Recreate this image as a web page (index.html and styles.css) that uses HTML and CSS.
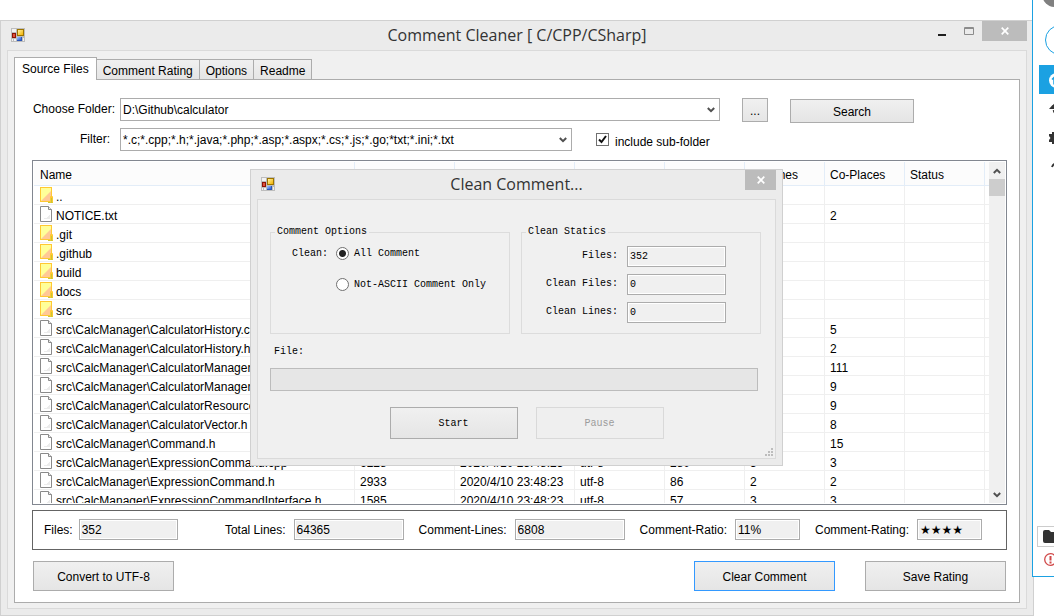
FILE: index.html
```
<!DOCTYPE html>
<html lang="en">
<head>
<meta charset="utf-8">
<title>Comment Cleaner</title>
<link rel="stylesheet" href="styles.css">
</head>
<body>
<svg class="defs" aria-hidden="true">
  <defs>
    <linearGradient id="gold" x1="0" y1="0" x2="1" y2="1"><stop offset="0" stop-color="#fff0a0"/><stop offset="1" stop-color="#f2b200"/></linearGradient>
    <linearGradient id="blue" x1="0" y1="0" x2="1" y2="1"><stop offset="0" stop-color="#a8c8ff"/><stop offset="1" stop-color="#2a5fd0"/></linearGradient>
    <symbol id="app" viewBox="0 0 14 14">
      <path d="M0 0H14V14H0z" fill="#bdbdbd"/>
      <path d="M1 1h4v3H1zM1 11h1v2H1zM3 11h2v2H3zM12 10h1v3h-1z" fill="#f2f2f2"/>
      <path d="M6 1h7v7H6z" fill="#9c7400"/><path d="M7 2h5v5H7z" fill="url(#gold)"/>
      <path d="M1 5h4v5H1z" fill="#8c1408"/><path d="M2 6h2v3H2z" fill="#e0523c"/>
      <path d="M6 9h5v4H6z" fill="#2a55b8"/><path d="M6 9h4v3H6z" fill="url(#blue)"/>
    </symbol>
    <symbol id="folder" viewBox="0 0 13 16">
      <path d="M0 0H12V15H0z" fill="#ffc832"/>
      <path d="M1 1H11V14H1z" fill="#ffff99"/><path d="M11 4V14H1z" fill="#ffc896"/>
      <path d="M8 15h5v1H8z" fill="#c8c832"/>
      <path d="M10.500 15.500V9.500h2V15.500" fill="none" stroke="#ffc832"/><path d="M11 11h1v4h-1z" fill="#c8c832"/>
    </symbol>
    <symbol id="file" viewBox="0 0 13 16">
      <path d="M.5.500H8.500L11.500 3.500V15.500H.5z" fill="#fff" stroke="#8a8a8a"/>
      <path d="M8.500.500V3.500H11.500" fill="#eee" stroke="#8a8a8a"/>
      <path d="M10 9v4H4v-1h3v-1h1v-1h1V9z" fill="#ececec"/>
    </symbol>
    <symbol id="close" viewBox="0 0 8 8"><path d="M.7.700L7.300 7.300M7.300.700L.7 7.300" fill="none" stroke="#fff" stroke-width="1.700"/></symbol>
    <symbol id="chev" viewBox="0 0 8 6"><path d="M.8 1L4 4.200L7.200 1" fill="none" stroke="#505050" stroke-width="2"/></symbol>
  </defs>
</svg>

<main class="window main-window">
  <header class="titlebar">
    <svg class="app-icon"><use href="#app"/></svg>
    <h1 class="title">Comment Cleaner [ C/CPP/CSharp]</h1>
    <div class="controls">
      <button class="ctl" aria-label="Minimize"><svg width="8" height="10"><path d="M0 8h8v2H0z" fill="#1e1e1e"/></svg></button>
      <button class="ctl" aria-label="Maximize"><svg width="10" height="8"><path d="M.5.500h9v7h-9zM0 1.500h10" fill="none" stroke="#8c8c8c"/></svg></button>
      <button class="ctl ctl-close" aria-label="Close"><svg width="8" height="8"><use href="#close"/></svg></button>
    </div>
  </header>
  <div class="client">
    <nav class="tabs" role="tablist">
      <button class="tab active" role="tab" aria-selected="true">Source Files</button>
      <button class="tab" role="tab">Comment Rating</button>
      <button class="tab" role="tab">Options</button>
      <button class="tab" role="tab">Readme</button>
    </nav>
    <section class="pane">
      <div class="row">
        <label class="field-label" for="dir">Choose Folder:</label>
        <select class="combo" id="dir"><option>D:\Github\calculator</option></select>
        <button class="btn browse">...</button>
        <button class="btn search">Search</button>
      </div>
      <div class="row">
        <label class="field-label filter-label" for="filter">Filter:</label>
        <select class="combo" id="filter"><option>*.c;*.cpp;*.h;*.java;*.php;*.asp;*.aspx;*.cs;*.js;*.go;*txt;*.ini;*.txt</option></select>
        <label class="check"><input type="checkbox" checked>include sub-folder</label>
      </div>

      <div class="list">
        <div class="list-view">
          <table>
            <colgroup><col class="c-name"><col class="c-size"><col class="c-date"><col class="c-enc"><col class="c-num"><col class="c-num"><col class="c-num"><col class="c-num"><col></colgroup>
            <thead><tr><th>Name</th><th></th><th></th><th></th><th></th><th>Co-Lines</th><th>Co-Places</th><th>Status</th><th></th></tr></thead>
            <tbody>
              <tr><td><svg class="ico"><use href="#folder"/></svg>..</td><td></td><td></td><td></td><td></td><td></td><td></td><td></td><td></td></tr>
              <tr><td><svg class="ico"><use href="#file"/></svg>NOTICE.txt</td><td></td><td></td><td></td><td></td><td></td><td>2</td><td></td><td></td></tr>
              <tr><td><svg class="ico"><use href="#folder"/></svg>.git</td><td></td><td></td><td></td><td></td><td></td><td></td><td></td><td></td></tr>
              <tr><td><svg class="ico"><use href="#folder"/></svg>.github</td><td></td><td></td><td></td><td></td><td></td><td></td><td></td><td></td></tr>
              <tr><td><svg class="ico"><use href="#folder"/></svg>build</td><td></td><td></td><td></td><td></td><td></td><td></td><td></td><td></td></tr>
              <tr><td><svg class="ico"><use href="#folder"/></svg>docs</td><td></td><td></td><td></td><td></td><td></td><td></td><td></td><td></td></tr>
              <tr><td><svg class="ico"><use href="#folder"/></svg>src</td><td></td><td></td><td></td><td></td><td></td><td></td><td></td><td></td></tr>
              <tr><td><svg class="ico"><use href="#file"/></svg>src\CalcManager\CalculatorHistory.cpp</td><td></td><td></td><td></td><td></td><td></td><td>5</td><td></td><td></td></tr>
              <tr><td><svg class="ico"><use href="#file"/></svg>src\CalcManager\CalculatorHistory.h</td><td></td><td></td><td></td><td></td><td></td><td>2</td><td></td><td></td></tr>
              <tr><td><svg class="ico"><use href="#file"/></svg>src\CalcManager\CalculatorManager.cpp</td><td></td><td></td><td></td><td></td><td></td><td>111</td><td></td><td></td></tr>
              <tr><td><svg class="ico"><use href="#file"/></svg>src\CalcManager\CalculatorManager.h</td><td></td><td></td><td></td><td></td><td></td><td>9</td><td></td><td></td></tr>
              <tr><td><svg class="ico"><use href="#file"/></svg>src\CalcManager\CalculatorResource.h</td><td></td><td></td><td></td><td></td><td></td><td>9</td><td></td><td></td></tr>
              <tr><td><svg class="ico"><use href="#file"/></svg>src\CalcManager\CalculatorVector.h</td><td></td><td></td><td></td><td></td><td></td><td>8</td><td></td><td></td></tr>
              <tr><td><svg class="ico"><use href="#file"/></svg>src\CalcManager\Command.h</td><td></td><td></td><td></td><td></td><td></td><td>15</td><td></td><td></td></tr>
              <tr><td><svg class="ico"><use href="#file"/></svg>src\CalcManager\ExpressionCommand.cpp</td><td>6228</td><td>2020/4/10 23:48:23</td><td>utf-8</td><td>280</td><td>3</td><td>3</td><td></td><td></td></tr>
              <tr><td><svg class="ico"><use href="#file"/></svg>src\CalcManager\ExpressionCommand.h</td><td>2933</td><td>2020/4/10 23:48:23</td><td>utf-8</td><td>86</td><td>2</td><td>2</td><td></td><td></td></tr>
              <tr><td><svg class="ico"><use href="#file"/></svg>src\CalcManager\ExpressionCommandInterface.h</td><td>1585</td><td>2020/4/10 23:48:23</td><td>utf-8</td><td>57</td><td>3</td><td>3</td><td></td><td></td></tr>
            </tbody>
          </table>
        </div>
        <div class="scrollbar">
          <svg class="arrow up"><use href="#chev"/></svg>
          <div class="thumb"></div>
          <svg class="arrow down"><use href="#chev"/></svg>
        </div>
      </div>

      <div class="stats">
        <label class="stat">Files:<input class="w-mid" readonly value="352"></label>
        <label class="stat">Total Lines:<input class="w-wide" readonly value="64365"></label>
        <label class="stat">Comment-Lines:<input class="w-wide" readonly value="6808"></label>
        <label class="stat">Comment-Ratio:<input class="w-small" readonly value="11%"></label>
        <label class="stat">Comment-Rating:<input class="w-small stars" readonly value="★★★★"></label>
      </div>
      <div class="actions">
        <button class="btn big">Convert to UTF-8</button>
        <button class="btn big primary">Clear Comment</button>
        <button class="btn big">Save Rating</button>
      </div>
    </section>
  </div>
</main>

<aside class="side">
  <div class="avatar"></div>
  <div class="ring"></div>
  <div class="side-item selected"><svg width="15" height="15"><circle cx="7.500" cy="7.500" r="7.500" fill="#fff"/><path d="M3 6.500l2-2v7" fill="none" stroke="#1ba1e2" stroke-width="1.500"/></svg></div>
  <div class="side-item"><svg width="16" height="14"><path d="M3.500 6C4 3 6 1.500 9 1.500M4.500 8c.5 3 3 4.500 6 4" fill="none" stroke="#333" stroke-width="1.600"/><path d="M0 7L3.500 3L7 7z" fill="#333"/></svg></div>
  <div class="side-item"><svg width="16" height="14"><path d="M0 3h3V1h9v12H3v-2H0V9l1.500-2L0 5z" fill="#333"/></svg></div>
  <div class="side-item"><svg width="16" height="14"><path d="M3 7C4 4 7 3 9 3" fill="none" stroke="#333" stroke-width="2"/></svg></div>
  <div class="side-folder"><svg width="20" height="13"><path d="M0 2q0-2 2-2h4l2 2h10v11H2q-2 0-2-2z" fill="#333"/></svg></div>
  <div class="side-alert"><svg width="13" height="13"><circle cx="6.500" cy="6.500" r="5.800" fill="#fff" stroke="#d04848" stroke-width="1.300"/><path d="M5.500 3h2v4.500h-2zM5.500 8.500h2v2h-2z" fill="#d04848"/></svg></div>
</aside>

<div class="window dialog" role="dialog" aria-labelledby="dlg-title">
  <header class="titlebar">
    <svg class="app-icon"><use href="#app"/></svg>
    <h2 class="title" id="dlg-title">Clean Comment...</h2>
    <div class="controls"><button class="ctl ctl-close narrow" aria-label="Close"><svg width="8" height="8"><use href="#close"/></svg></button></div>
  </header>
  <div class="client dlg-client">
    <div class="groups">
      <fieldset class="group">
        <legend>Comment Options</legend>
        <div class="options">
          <span class="clean-label">Clean:</span>
          <div class="radios">
            <label><input type="radio" name="mode" checked>All Comment</label>
            <label><input type="radio" name="mode">Not-ASCII Comment Only</label>
          </div>
        </div>
      </fieldset>
      <fieldset class="group">
        <legend>Clean Statics</legend>
        <div class="counts">
          <label for="n1">Files:</label><input id="n1" readonly value="352">
          <label for="n2">Clean Files:</label><input id="n2" readonly value="0">
          <label for="n3">Clean Lines:</label><input id="n3" readonly value="0">
        </div>
      </fieldset>
    </div>
    <div class="file-line">File:</div>
    <div class="progress" role="progressbar" aria-label="Progress" aria-valuenow="0"></div>
    <div class="dlg-actions">
      <button class="btn dlg-btn">Start</button>
      <button class="btn dlg-btn" disabled>Pause</button>
    </div>
    <svg class="grip" width="8" height="8"><path d="M6 0h2v2H6zM3 3h2v2H3zM6 3h2v2H6zM0 6h2v2H0zM3 6h2v2H3zM6 6h2v2H6z" fill="#bdbdbd"/></svg>
  </div>
</div>
</body>
</html>
```
FILE: styles.css
```
* { box-sizing: border-box; }
html, body { height: 100%; }
body {
  margin: 0;
  position: relative;
  overflow: hidden;
  background: #fff;
  color: #000;
  font: 12px/18px "Liberation Sans", Arial, sans-serif;
}
button, input, select { font: inherit; color: inherit; margin: 0; border-radius: 0; }
.defs { position: absolute; width: 0; height: 0; }

/* Windows */
.window { position: absolute; display: flex; flex-direction: column; background: #ebebeb; border: 1px solid #d0d0d0; padding: 0 6px 6px; }
.main-window { left: 0; right: 20px; top: 20px; bottom: 0; }
.dialog { left: 250px; top: 169px; width: 533px; font: 10px/14px "Liberation Mono", monospace; }
.titlebar { flex: none; height: 29px; display: grid; grid-template-columns: 1fr auto 1fr; align-items: start; }
.app-icon { width: 14px; height: 14px; margin: 7px 0 0 4px; }
.title { margin: 0; font: 16px/28px "Open Sans", sans-serif; color: #333; }
.controls { display: flex; justify-content: flex-end; }
.ctl { width: 27px; height: 20px; padding: 0; border: 0; background: none; display: flex; align-items: center; justify-content: center; }
.ctl-close { width: 45px; background: #bcbcbc; }
.narrow { width: 31px; }
.client { flex: 1; display: flex; flex-direction: column; min-height: 0; background: #f0f0f0; border: 1px solid #dadada; padding: 6px 6px 5px; }

/* Tabs */
.tabs { flex: none; display: flex; align-items: flex-end; height: 22px; }
.tab { height: 20px; border: 1px solid #acacac; border-left: 0; border-bottom: 0; background: linear-gradient(#f0f0f0, #e5e5e5); padding: 3px 6px 0; line-height: 16px; white-space: nowrap; }
.tab.active { height: 23px; margin-bottom: -1px; border-left: 1px solid #acacac; background: #fff; padding: 0 7px; z-index: 1; }
.pane { flex: 1; display: flex; flex-direction: column; min-height: 0; background: #fff; border: 1px solid #acacac; padding: 18px 12px 11px 17px; }

/* Form */
.row { flex: none; display: flex; height: 23px; margin-bottom: 7px; }
.field-label { width: 88px; padding-right: 5px; text-align: right; line-height: 23px; white-space: nowrap; }
.filter-label { padding-right: 10px; }
.combo {
  flex: 0 1 600px; min-width: 0; height: 23px; padding: 0 24px 0 2px;
  appearance: none; border: 1px solid #acacac;
  background: #fff url("data:image/svg+xml,%3Csvg xmlns='http://www.w3.org/2000/svg' width='8' height='6'%3E%3Cpath d='M.8 1L4 4.200L7.200 1' fill='none' stroke='%23505050' stroke-width='2'/%3E%3C/svg%3E") no-repeat right 4px center;
}
#filter { flex-basis: 452px; }
.btn { padding: 2px 0 0; border: 1px solid #acacac; background: linear-gradient(#f0f0f0, #e5e5e5); }
.browse { width: 26px; height: 24px; margin: 0 22px; }
.search { width: 124px; height: 24px; margin-top: 1px; }
.check { display: flex; align-items: center; margin: 4px 0 0 24px; white-space: nowrap; }
.check input {
  appearance: none; width: 13px; height: 13px; margin: -4px 6px 0 0; border: 1px solid #707070;
  background: #fff url("data:image/svg+xml,%3Csvg xmlns='http://www.w3.org/2000/svg' width='11' height='11'%3E%3Cpath d='M2 5.500L4.500 8L9 2' fill='none' stroke='%23111' stroke-width='2'/%3E%3C/svg%3E") center;
}

/* File list */
.list { flex: 1; min-height: 0; display: flex; margin-top: 2px; padding: 1px; border: 1px solid #828790; }
.list-view { flex: 1; min-width: 0; overflow: hidden; }
table { width: 100%; table-layout: fixed; border-collapse: separate; border-spacing: 0; }
.c-name { width: 321px; }
.c-size { width: 100px; }
.c-date { width: 120px; }
.c-enc { width: 90px; }
.c-num { width: 80px; }
th { height: 24px; padding: 3px 5px 0; text-align: left; font-weight: normal; background: #fcfcfc; border-right: 1px solid #e3edf8; border-bottom: 1px solid #e3edf8; }
td { height: 19px; padding: 4px 5px 0; line-height: 14px; white-space: nowrap; overflow: hidden; border-right: 1px solid #efefef; border-bottom: 1px solid #efefef; }
th:first-child, td:first-child { padding-left: 6px; }
th:last-child, td:last-child { border-right: 0; padding: 0; }
.ico { width: 13px; height: 16px; margin: -3px 3px 0 0; vertical-align: top; }
.scrollbar { flex: none; width: 16px; background: #f0f0f0; display: flex; flex-direction: column; align-items: center; }
.arrow { width: 8px; height: 6px; margin: 6px 0 5px; }
.up { transform: rotate(180deg); }
.down { margin-top: auto; }
.thumb { width: 16px; height: 17px; background: #cdcdcd; }

/* Totals */
.stats { flex: none; display: flex; gap: 15px; margin-top: 5px; padding: 8px 24px 9px 11px; border: 1px solid #646464; }
.stat { display: flex; align-items: center; gap: 8px; white-space: nowrap; }
.stat:first-child { margin-right: auto; gap: 6px; }
input[readonly] { height: 21px; padding: 0 2px; border: 1px solid #acacac; background: #f0f0f0; box-shadow: inset 0 0 0 1px #fff; }
.stat input[readonly] { padding-top: 1px; }
.w-mid { width: 99px; }
.w-wide { width: 110px; }
.w-small { width: 65px; }
.stars { font-family: "DejaVu Sans", sans-serif; }
.actions { flex: none; display: flex; gap: 30px; margin-top: 11px; padding: 0 1px; }
.big { width: 141px; height: 30px; }
.primary { margin-left: auto; border-color: #3399ff; }

/* Dialog */
.dlg-client { position: relative; padding: 27px 14px 19px 12px; }
.groups { display: flex; gap: 11px; }
.group { flex: 0 0 240px; height: 107px; min-width: 0; margin: 0; padding: 0; border: 1px solid #dcdcdc; }
.group legend { margin-left: 4px; padding: 0 2px; line-height: 10px; }
.options { display: flex; padding: 8px 0 0 21px; gap: 8px; }
.clean-label { line-height: 18px; }
.radios { display: flex; flex-direction: column; gap: 13px; }
.radios label { display: flex; align-items: center; gap: 5px; line-height: 18px; }
.radios input { appearance: none; width: 13px; height: 13px; margin-bottom: 2px; border: 1px solid #707070; border-radius: 50%; background: #fff; }
.radios input:checked { background: radial-gradient(circle, #222 3px, #fff 4px); }
.counts { display: grid; grid-template-columns: 96px 99px; column-gap: 9px; row-gap: 7px; margin-top: 9px; text-align: right; line-height: 20px; }
.file-line { margin: 11px 4px 9px; line-height: 14px; }
.progress { height: 23px; margin-right: 3px; background: #e6e6e6; border: 1px solid #bcbcbc; }
.dlg-actions { display: flex; justify-content: center; gap: 18px; margin-top: 16px; padding-left: 22px; }
.dlg-btn { width: 128px; height: 32px; }
.dlg-btn:disabled { color: #9c9c9c; border-color: #d9d9d9; background: #efefef; }
.grip { position: absolute; right: 2px; bottom: 2px; }

/* Docked panel at the screen edge */
.side { position: absolute; right: 0; top: 0; width: 22px; height: 577px; overflow: hidden; display: flex; flex-direction: column; background: #fff; border: solid #1ba1e2; border-width: 0 0 1px 1px; }
.side > * { flex: none; }
.avatar { width: 26px; height: 26px; margin: -19px 0 0 9px; border-radius: 50%; background: #808080; }
.ring { width: 30px; height: 30px; margin: 18px 0 10px 12px; border: 1px solid #1ba1e2; border-radius: 50%; }
.side-item { height: 29px; padding: 8px 0 0 10px; margin-left: 6px; line-height: 0; }
.selected { background: #1ba1e2; }
.side-folder { height: 21px; margin: auto 0 6px 4px; padding: 3px 0 0 5px; border: 1px solid #ccc; line-height: 0; width: 40px; }
.side-alert { margin: 0 0 10px 11px; line-height: 0; }
```
